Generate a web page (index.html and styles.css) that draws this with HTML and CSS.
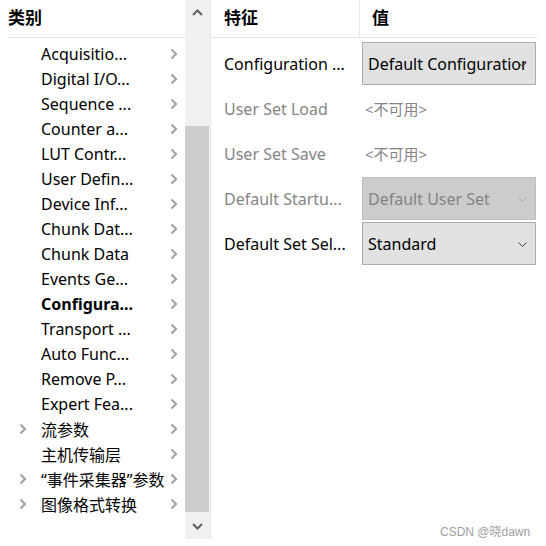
FILE: index.html
```html
<!DOCTYPE html>
<html>
<head>
<meta charset="utf-8">
<link rel="stylesheet" href="styles.css">
</head>
<body>
<div class="app">
  <div class="tree">
    <div class="tree-head">类别</div>
    <div class="tree-body">
      <div class="node"><span class="exp"></span><span class="label">Acquisitio...</span><svg class="chev" viewBox="0 0 8 12"><path d="M1.5 1.5 L6 6 L1.5 10.5"/></svg></div>
      <div class="node"><span class="exp"></span><span class="label">Digital I/O...</span><svg class="chev" viewBox="0 0 8 12"><path d="M1.5 1.5 L6 6 L1.5 10.5"/></svg></div>
      <div class="node"><span class="exp"></span><span class="label">Sequence ...</span><svg class="chev" viewBox="0 0 8 12"><path d="M1.5 1.5 L6 6 L1.5 10.5"/></svg></div>
      <div class="node"><span class="exp"></span><span class="label">Counter a...</span><svg class="chev" viewBox="0 0 8 12"><path d="M1.5 1.5 L6 6 L1.5 10.5"/></svg></div>
      <div class="node"><span class="exp"></span><span class="label">LUT Contr...</span><svg class="chev" viewBox="0 0 8 12"><path d="M1.5 1.5 L6 6 L1.5 10.5"/></svg></div>
      <div class="node"><span class="exp"></span><span class="label">User Defin...</span><svg class="chev" viewBox="0 0 8 12"><path d="M1.5 1.5 L6 6 L1.5 10.5"/></svg></div>
      <div class="node"><span class="exp"></span><span class="label">Device Inf...</span><svg class="chev" viewBox="0 0 8 12"><path d="M1.5 1.5 L6 6 L1.5 10.5"/></svg></div>
      <div class="node"><span class="exp"></span><span class="label">Chunk Dat...</span><svg class="chev" viewBox="0 0 8 12"><path d="M1.5 1.5 L6 6 L1.5 10.5"/></svg></div>
      <div class="node"><span class="exp"></span><span class="label">Chunk Data</span><svg class="chev" viewBox="0 0 8 12"><path d="M1.5 1.5 L6 6 L1.5 10.5"/></svg></div>
      <div class="node"><span class="exp"></span><span class="label">Events Ge...</span><svg class="chev" viewBox="0 0 8 12"><path d="M1.5 1.5 L6 6 L1.5 10.5"/></svg></div>
      <div class="node"><span class="exp"></span><span class="label bold">Configura...</span><svg class="chev" viewBox="0 0 8 12"><path d="M1.5 1.5 L6 6 L1.5 10.5"/></svg></div>
      <div class="node"><span class="exp"></span><span class="label">Transport ...</span><svg class="chev" viewBox="0 0 8 12"><path d="M1.5 1.5 L6 6 L1.5 10.5"/></svg></div>
      <div class="node"><span class="exp"></span><span class="label">Auto Func...</span><svg class="chev" viewBox="0 0 8 12"><path d="M1.5 1.5 L6 6 L1.5 10.5"/></svg></div>
      <div class="node"><span class="exp"></span><span class="label">Remove P...</span><svg class="chev" viewBox="0 0 8 12"><path d="M1.5 1.5 L6 6 L1.5 10.5"/></svg></div>
      <div class="node"><span class="exp"></span><span class="label">Expert Fea...</span><svg class="chev" viewBox="0 0 8 12"><path d="M1.5 1.5 L6 6 L1.5 10.5"/></svg></div>
      <div class="node"><svg class="exp chev" viewBox="0 0 8 12"><path d="M1.5 1.5 L6 6 L1.5 10.5"/></svg><span class="label">流参数</span><svg class="chev" viewBox="0 0 8 12"><path d="M1.5 1.5 L6 6 L1.5 10.5"/></svg></div>
      <div class="node"><span class="exp"></span><span class="label">主机传输层</span><svg class="chev" viewBox="0 0 8 12"><path d="M1.5 1.5 L6 6 L1.5 10.5"/></svg></div>
      <div class="node"><svg class="exp chev" viewBox="0 0 8 12"><path d="M1.5 1.5 L6 6 L1.5 10.5"/></svg><span class="label">“事件采集器”参数</span><svg class="chev" viewBox="0 0 8 12"><path d="M1.5 1.5 L6 6 L1.5 10.5"/></svg></div>
      <div class="node"><svg class="exp chev" viewBox="0 0 8 12"><path d="M1.5 1.5 L6 6 L1.5 10.5"/></svg><span class="label">图像格式转换</span><svg class="chev" viewBox="0 0 8 12"><path d="M1.5 1.5 L6 6 L1.5 10.5"/></svg></div>
    </div>
  </div>
  <div class="scrollbar">
    <div class="sb-btn"><svg viewBox="0 0 11 7"><path d="M1 6 L5.5 1.5 L10 6"/></svg></div>
    <div class="sb-track">
      <div class="sb-space"></div>
      <div class="sb-thumb"></div>
    </div>
    <div class="sb-btn"><svg viewBox="0 0 11 7"><path d="M1 1 L5.5 5.5 L10 1"/></svg></div>
  </div>
  <div class="divider"></div>
  <div class="grid">
    <div class="grid-head">
      <div class="col-name">特征</div>
      <div class="col-value">值</div>
    </div>
    <div class="grid-body">
      <div class="row">
        <div class="name">Configuration ...</div>
        <div class="value"><div class="combo"><span class="combo-text">Default Configuration</span><svg class="combo-arrow" viewBox="0 0 9 5"><path d="M0.5 0.5 L4.5 4.5 L8.5 0.5"/></svg></div></div>
      </div>
      <div class="row disabled">
        <div class="name">User Set Load</div>
        <div class="value"><span class="na">&lt;不可用&gt;</span></div>
      </div>
      <div class="row disabled">
        <div class="name">User Set Save</div>
        <div class="value"><span class="na">&lt;不可用&gt;</span></div>
      </div>
      <div class="row disabled">
        <div class="name">Default Startu...</div>
        <div class="value"><div class="combo off"><span class="combo-text">Default User Set</span><svg class="combo-arrow" viewBox="0 0 9 5"><path d="M0.5 0.5 L4.5 4.5 L8.5 0.5"/></svg></div></div>
      </div>
      <div class="row">
        <div class="name">Default Set Sel...</div>
        <div class="value"><div class="combo"><span class="combo-text">Standard</span><svg class="combo-arrow" viewBox="0 0 9 5"><path d="M0.5 0.5 L4.5 4.5 L8.5 0.5"/></svg></div></div>
      </div>
    </div>
  </div>
</div>
<div class="watermark">CSDN @晓dawn</div>
</body>
</html>
```
FILE: styles.css
```css
html, body {
  margin: 0;
  padding: 0;
  background: #ffffff;
}
body {
  font-family: "Noto Sans", "Noto Sans CJK SC", sans-serif;
  font-size: 16px;
  color: #000;
  width: 546px;
  height: 546px;
  overflow: hidden;
  position: relative;
}
.app {
  display: flex;
  height: 539px;
}
.tree {
  width: 185px;
  flex: none;
}
.tree-head {
  margin-left: 8px;
  height: 38px;
  box-sizing: border-box;
  border-bottom: 1px solid #e3e3e3;
  font-family: "Noto Sans CJK SC", sans-serif;
  font-weight: bold;
  font-size: 17px;
  line-height: 33px;
}
.tree-body {
  padding-top: 3px;
}
.node {
  height: 25px;
  display: flex;
  align-items: center;
  white-space: nowrap;
}
.exp {
  width: 8px;
  height: 12px;
  margin-left: 19px;
  margin-right: 14px;
  flex: none;
}
.label {
  width: 129px;
  flex: none;
  overflow: hidden;
}
.bold {
  font-weight: bold;
}
.chev {
  width: 8px;
  height: 12px;
  flex: none;
}
.chev path {
  fill: none;
  stroke: #a3a3a3;
  stroke-width: 2.2;
}
.scrollbar {
  width: 25px;
  flex: none;
  background: #f0f0f0;
  display: flex;
  flex-direction: column;
}
.sb-btn {
  height: 25px;
  flex: none;
  display: flex;
  align-items: center;
  justify-content: center;
}
.sb-btn svg {
  width: 11px;
  height: 7px;
}
.sb-btn path {
  fill: none;
  stroke: #606060;
  stroke-width: 2;
}
.sb-track {
  flex: 1;
  display: flex;
  flex-direction: column;
}
.sb-space {
  height: 101px;
}
.sb-thumb {
  height: 386px;
  margin-right: 1px;
  background: #cdcdcd;
}
.divider {
  width: 1px;
  background: #e8e8e8;
  flex: none;
}
.grid {
  width: 326px;
  flex: none;
}
.grid-head {
  display: flex;
  height: 38px;
  box-sizing: border-box;
  border-bottom: 1px solid #e3e3e3;
  font-family: "Noto Sans CJK SC", sans-serif;
  font-weight: bold;
  font-size: 17px;
  line-height: 33px;
}
.col-name {
  width: 149px;
  padding-left: 13px;
  box-sizing: border-box;
  border-right: 1px solid #e8e8e8;
}
.col-value {
  padding-left: 12px;
}
.grid-body {
  padding-top: 3px;
}
.row {
  display: flex;
  height: 45px;
  align-items: center;
}
.name {
  width: 151px;
  flex: none;
  padding-left: 13px;
  box-sizing: border-box;
  white-space: nowrap;
  overflow: hidden;
}
.disabled .name {
  color: #858585;
}
.value {
  width: 174px;
  flex: none;
  display: flex;
  align-items: center;
}
.na {
  color: #858585;
  font-size: 15px;
  padding-left: 3px;
}
.combo {
  position: relative;
  width: 174px;
  min-width: 0;
  height: 43px;
  box-sizing: border-box;
  border: 1px solid #adadad;
  background: #e1e1e1;
  display: flex;
  align-items: center;
  padding-left: 5px;
  padding-right: 9px;
  overflow: hidden;
  white-space: nowrap;
}
.combo-text {
  overflow: hidden;
  min-width: 0;
}
.combo-arrow {
  position: absolute;
  right: 8px;
  top: 19px;
  width: 9px;
  height: 5px;
}
.combo-arrow path {
  fill: none;
  stroke: #444;
  stroke-width: 1;
}
.combo.off {
  background: #cccccc;
  border-color: #bfbfbf;
  color: #838383;
}
.combo.off .combo-arrow path {
  stroke: #a8a8a8;
}
.watermark {
  position: absolute;
  left: 440px;
  top: 522px;
  font-family: "Liberation Sans", "Noto Sans CJK SC", sans-serif;
  font-size: 12px;
  color: #a0a0a0;
}
```
